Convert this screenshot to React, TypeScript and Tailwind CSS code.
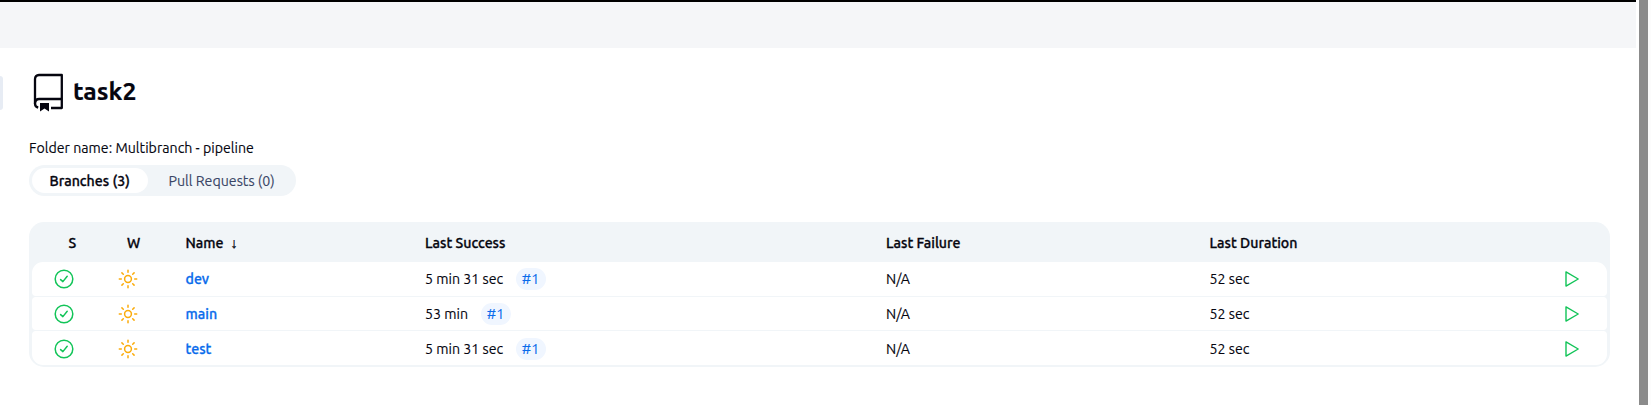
import React from "react";

const FONT = "font-['Ubuntu','Noto_Sans',sans-serif]";
const COLS = "grid grid-cols-[86px_67.500px_239.500px_461px_323.5px_355px_1fr]";
const STRONG = "font-medium [-webkit-text-stroke:0.3px_currentColor]";

function RepoIcon() {
  return (
    <svg width="32" height="40" viewBox="0 0 32 40" fill="none" stroke="#05050f" strokeWidth="2.300" className="shrink-0">
      <path d="M6.200 35.700C4 35 3 33.800 3 31.700V7A4.200 4.200 0 0 1 7 3H29.800V36H19" strokeLinejoin="round" />
      <path d="M3 31.700c0-3 1.800-4.700 4.200-4.700H29.800" />
      <path d="M8 31h9V39.500l-4.500-3.100L8 39.500z" fill="#05050f" stroke="none" />
    </svg>
  );
}

function CheckIcon() {
  return (
    <svg width="20" height="20" viewBox="0 0 20 20" fill="none" stroke="#12c458" strokeWidth="1.500" strokeLinecap="round" strokeLinejoin="round">
      <circle cx="10" cy="10" r="8.800" />
      <path d="M6.600 10.600 8.900 12.600 13.200 7.300" />
    </svg>
  );
}

function SunIcon() {
  return (
    <svg width="20" height="20" viewBox="0 0 20 20" fill="none" stroke="#fbac0c" strokeWidth="1.500" strokeLinecap="round">
      <circle cx="10" cy="10" r="3.400" />
      <path d="M10 1.300v2M10 16.700v2M1.300 10h2M16.700 10h2M3.900 3.900l1.400 1.400M14.700 14.700l1.400 1.400M3.900 16.100l1.400-1.400M14.700 5.300l1.400-1.400" />
    </svg>
  );
}

function PlayIcon() {
  return (
    <svg width="14" height="16" viewBox="0 0 14 16" fill="none" stroke="#12c458" strokeWidth="1.4" strokeLinejoin="round">
      <path d="M1 .9V15.100L13.200 8z" />
    </svg>
  );
}

const rows = [
  { name: "dev", success: "5 min 31 sec", gap: "w-[90.500px]", shape: "h-[34px] rounded-t-[11px] rounded-b-[4px]", pad: "pb-px" },
  { name: "main", success: "53 min", gap: "w-[55.500px]", shape: "h-[33px] rounded-[4px]", pad: "" },
  { name: "test", success: "5 min 31 sec", gap: "w-[90.500px]", shape: "h-[34px] rounded-t-[4px] rounded-b-[11px]", pad: "pt-px" },
];

export default function App() {
  return (
    <div className={`flex h-[405px] w-[1651px] overflow-hidden bg-white text-[14.2px] leading-5 text-[#05050f] [-webkit-text-stroke:0.12px_currentColor] ${FONT}`}>
      <main className="w-[1636px] shrink-0">
        <div className="h-[2px] bg-black" />
        <div className="h-[46px] bg-[#f5f6f8]" />
        <div className="flex">
          <div className="mt-7 h-[34px] w-[3px] shrink-0 rounded-r-[4px] bg-[#e7ecf4]" />
          <div className="pl-[26px] pt-[24px]">
            <div className="flex h-10 items-center gap-[9.500px] pl-[2.500px]">
              <RepoIcon />
              <h1 className="pb-[2px] text-[24.8px] font-bold leading-8 [-webkit-text-stroke:0.2px_currentColor]">task2</h1>
            </div>
            <p className="mt-[26px] h-5 whitespace-nowrap">Folder name: Multibranch - pipeline</p>
            <div className="mt-[7px] flex h-[31px] w-[267px] rounded-full bg-[#f1f5f8] p-[3px]">
              <button className={`w-[116px] whitespace-nowrap rounded-full bg-white pl-[17.500px] text-left ${STRONG}`}>Branches (3)</button>
              <button className="whitespace-nowrap pl-[20.500px] text-left text-[#3a4666]">Pull Requests (0)</button>
            </div>
            <section className="mt-[26px] h-[145px] w-[1581px] rounded-[15px] bg-[#f1f5f8] px-[3px] pb-[2px]">
              <div className={`${COLS} ${STRONG} h-10 items-center whitespace-nowrap pt-px`}>
                <span className="pl-[36.500px]">S</span>
                <span className="pl-[9px]">W</span>
                <span className="flex gap-[7px]">Name <span>↓</span></span>
                <span>Last Success</span>
                <span>Last Failure</span>
                <span>Last Duration</span>
              </div>
              <div className="flex flex-col gap-px">
                {rows.map((r) => (
                  <div key={r.name} className={`${COLS} ${r.shape} ${r.pad} items-center whitespace-nowrap bg-white`}>
                    <span className="pl-[22px]"><CheckIcon /></span>
                    <span><SunIcon /></span>
                    <a className={`${STRONG} text-[#096bec]`}>{r.name}</a>
                    <span className="flex items-center">
                      <span className={r.gap}>{r.success}</span>
                      <span className="flex h-[22px] w-[30px] items-center justify-center rounded-full bg-[#f0f6ff] text-[#096bec]">#1</span>
                    </span>
                    <span>N/A</span>
                    <span>52 sec</span>
                    <PlayIcon />
                  </div>
                ))}
              </div>
            </section>
          </div>
        </div>
      </main>
      <div className="ml-[3px] h-full w-[9px] bg-[#8b8b8b]" />
      <div className="h-full w-[3px] bg-[#fcfcfc]" />
    </div>
  );
}
